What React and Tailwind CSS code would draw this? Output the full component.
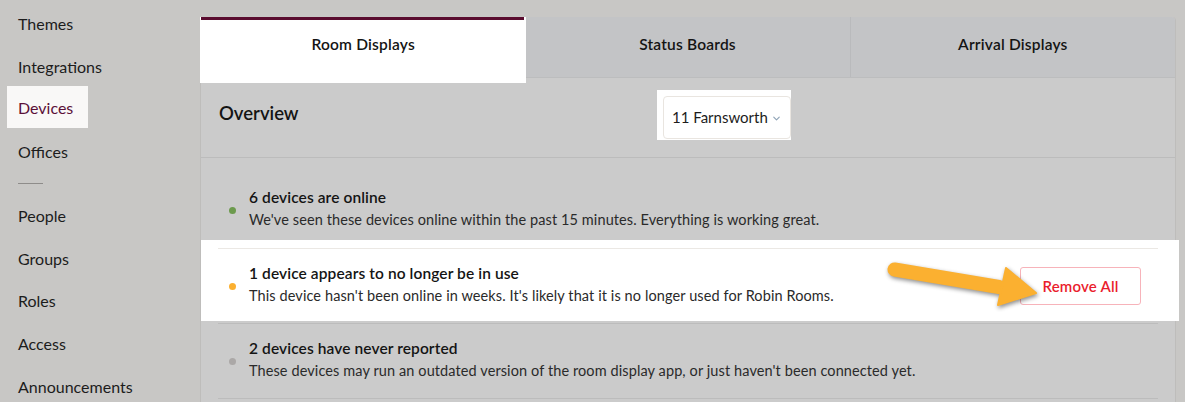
import React from 'react';
import { ChevronDown } from 'lucide-react';

const topNav = ['Themes', 'Integrations', 'Devices', 'Offices'];
const bottomNav = ['People', 'Groups', 'Roles', 'Access', 'Announcements'];

const NavItem = ({ label }) => {
  if (label === 'Devices') {
    return (
      <div className="ml-[7px] -mt-[2px] mb-[2.67px] flex h-[42px] w-[81px] items-center bg-[#f9f8f7] pl-[11px] pt-[3px] text-[#5b1038]">
        {label}
      </div>
    );
  }
  return (
    <div className="ml-[7px] flex h-[42.67px] items-center pl-[11px]">
      {label}
    </div>
  );
};

const StatusRow = ({ color, title, text }) => (
  <>
    <span className={`mr-[13px] h-[7px] w-[7px] shrink-0 rounded-full ${color}`} />
    <div className="-mt-[4px]">
      <div className="text-[15.5px] font-semibold leading-[20px] tracking-[0.1px] text-[#141414]">{title}</div>
      <div className="mt-[3px] text-[14.5px] leading-[20px] tracking-[0.1px] text-[#2a2a2a]">{text}</div>
    </div>
  </>
);

const App = () => {
  return (
    <div className="flex h-[402px] w-[1185px] overflow-hidden bg-[#c8c7c5] font-['Lato',sans-serif] text-[#1c1c1c]">
      {/* Sidebar */}
      <div className="w-[200px] shrink-0 pt-[2.67px] text-[16px]">
        {topNav.map((item) => (
          <NavItem key={item} label={item} />
        ))}
        <div className="flex h-[21.33px] items-center pl-[18px]">
          <div className="h-px w-[25px] bg-[#8e8c8a]" />
        </div>
        {bottomNav.map((item) => (
          <NavItem key={item} label={item} />
        ))}
      </div>

      {/* Main */}
      <div className="flex-1 pr-[9px] pt-[17px]">
        <div className="min-h-[400px] rounded-t-[4px] border-x border-[#bebdbb] bg-[#cbcbcb]">
          {/* Tabs */}
          <div className="relative z-10 flex h-[61px] rounded-t-[4px] border-b border-[#bcbdbe] bg-[#c3c4c6] text-[15.5px] font-semibold tracking-[0.2px] text-[#141414]">
            <div className="relative flex-1">
              <div className="absolute -left-[1px] -right-[1px] top-0 -bottom-[6px] bg-white" />
              <div className="absolute left-0 right-[1px] top-0 h-[3px] bg-[#5a0c2f]" />
              <div className="relative flex h-full items-center justify-center pb-[4px]">Room Displays</div>
            </div>
            <div className="flex flex-1 items-center justify-center pb-[4px]">Status Boards</div>
            <div className="flex flex-1 items-center justify-center border-l border-[#b9babc] pb-[4px]">Arrival Displays</div>
          </div>

          {/* Overview header */}
          <div className="flex h-[80px] items-center border-b border-[#bcbcbc] pb-[5px] pl-[18px]">
            <div className="-mt-[3px] w-[438px] text-[18.5px] font-semibold text-[#141414]">Overview</div>
            <div className="bg-white pb-[1px] pl-[6px] pt-[6px]">
              <div className="flex h-[43px] w-[128px] items-center rounded-[4px] border border-[#e9e5e0] pl-[8px] text-[15px] text-[#1c1c1c]">
                11 Farnsworth
                <ChevronDown size={11} strokeWidth={2.5} className="ml-[3px] mt-[1px] text-[#8ea3b6]" />
              </div>
            </div>
          </div>

          {/* Device statuses */}
          <div className="px-[17px] pt-[15px]">
            <div className="flex h-[75px] items-center pl-[11px]">
              <StatusRow
                color="bg-[#6c9a4d]"
                title="6 devices are online"
                text="We've seen these devices online within the past 15 minutes. Everything is working great."
              />
            </div>

            <div className="relative">
              <div className="absolute -left-[17px] -right-[21px] -top-[8px] bottom-[2px] bg-white" />
              <div className="relative flex h-[75px] items-center border-t border-[#ebe8e4] pl-[11px] pr-[17px]">
                <StatusRow
                  color="bg-[#fbb031]"
                  title="1 device appears to no longer be in use"
                  text="This device hasn't been online in weeks. It's likely that it is no longer used for Robin Rooms."
                />
                <button className="ml-auto h-[38px] w-[121px] rounded-[3px] border border-[#f7b3ba] bg-white text-[15px] font-semibold tracking-[0.2px] text-[#ea1d2d]">
                  Remove All
                </button>
              </div>
              {/* pointer arrow */}
              <svg
                className="absolute left-[663px] top-[8px] z-20 drop-shadow-[1px_2px_2px_rgba(0,0,0,0.45)]"
                width="165"
                height="60"
                viewBox="0 0 165 60"
              >
                <line x1="13.5" y1="13.5" x2="118" y2="31" stroke="#fbb030" strokeWidth="14" strokeLinecap="round" />
                <polygon points="125,12 155,37 117,49" fill="#fbb030" strokeLinejoin="round" stroke="#fbb030" strokeWidth="2" />
              </svg>
            </div>

            <div className="flex h-[76px] items-center border-y border-[#bcbcbc] pl-[11px]">
              <StatusRow
                color="bg-[#aba8a7]"
                title="2 devices have never reported"
                text="These devices may run an outdated version of the room display app, or just haven't been connected yet."
              />
            </div>
          </div>
        </div>
      </div>
    </div>
  );
};

export default App;
